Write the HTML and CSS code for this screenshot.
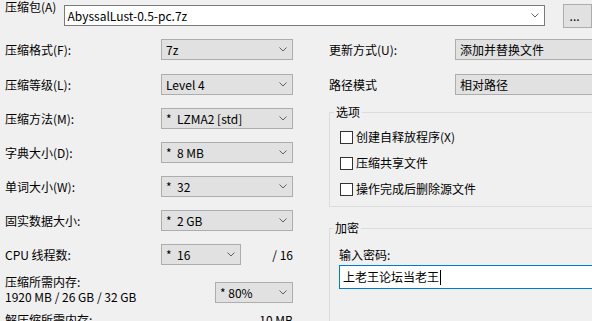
FILE: index.html
```html
<!DOCTYPE html>
<html lang="zh-CN">
<head>
<meta charset="UTF-8">
<title>添加到压缩包</title>
<link rel="stylesheet" href="styles.css">
</head>
<body>
<div class="dialog">
  <div class="archive">
    <span class="archive-label">压缩包(A)</span>
    <div class="combo edit archive-combo">
      <span>AbyssalLust-0.5-pc.7z</span>
      <svg class="chev" width="8" height="5" viewBox="0 0 8 5"><polyline points="0.5,0.5 4,4 7.5,0.5"/></svg>
    </div>
    <button class="browse">...</button>
  </div>

  <div class="columns">
    <div class="left">
      <div class="row">
        <span class="label">压缩格式(F):</span>
        <div class="combo"><span>7z</span><svg class="chev" width="8" height="5" viewBox="0 0 8 5"><polyline points="0.5,0.5 4,4 7.5,0.5"/></svg></div>
      </div>
      <div class="row">
        <span class="label">压缩等级(L):</span>
        <div class="combo"><span>Level 4</span><svg class="chev" width="8" height="5" viewBox="0 0 8 5"><polyline points="0.5,0.5 4,4 7.5,0.5"/></svg></div>
      </div>
      <div class="row">
        <span class="label">压缩方法(M):</span>
        <div class="combo"><span>* &nbsp;LZMA2 [std]</span><svg class="chev" width="8" height="5" viewBox="0 0 8 5"><polyline points="0.5,0.5 4,4 7.5,0.5"/></svg></div>
      </div>
      <div class="row">
        <span class="label">字典大小(D):</span>
        <div class="combo"><span>* &nbsp;8 MB</span><svg class="chev" width="8" height="5" viewBox="0 0 8 5"><polyline points="0.5,0.5 4,4 7.5,0.5"/></svg></div>
      </div>
      <div class="row">
        <span class="label">单词大小(W):</span>
        <div class="combo"><span>* &nbsp;32</span><svg class="chev" width="8" height="5" viewBox="0 0 8 5"><polyline points="0.5,0.5 4,4 7.5,0.5"/></svg></div>
      </div>
      <div class="row">
        <span class="label">固实数据大小:</span>
        <div class="combo"><span>* &nbsp;2 GB</span><svg class="chev" width="8" height="5" viewBox="0 0 8 5"><polyline points="0.5,0.5 4,4 7.5,0.5"/></svg></div>
      </div>
      <div class="row cpu">
        <span class="label">CPU 线程数:</span>
        <div class="combo small"><span>* &nbsp;16</span><svg class="chev" width="8" height="5" viewBox="0 0 8 5"><polyline points="0.5,0.5 4,4 7.5,0.5"/></svg></div>
        <span class="max">/ 16</span>
      </div>
      <div class="mem">
        <div class="mem-text">
          <div>压缩所需内存:</div>
          <div>1920 MB / 26 GB / 32 GB</div>
        </div>
        <div class="combo mem-combo"><span>* 80%</span><svg class="chev" width="8" height="5" viewBox="0 0 8 5"><polyline points="0.5,0.5 4,4 7.5,0.5"/></svg></div>
      </div>
      <div class="unpack">
        <span>解压缩所需内存:</span>
        <span>10 MB</span>
      </div>
    </div>

    <div class="right">
      <div class="row">
        <span class="label wide">更新方式(U):</span>
        <div class="combo plain"><span>添加并替换文件</span></div>
      </div>
      <div class="row last">
        <span class="label wide">路径模式</span>
        <div class="combo plain"><span>相对路径</span></div>
      </div>

      <fieldset class="group options">
        <legend>选项</legend>
        <label class="check"><span class="box"></span>创建自释放程序(X)</label>
        <label class="check"><span class="box"></span>压缩共享文件</label>
        <label class="check"><span class="box"></span>操作完成后删除源文件</label>
      </fieldset>

      <fieldset class="group encrypt">
        <legend>加密</legend>
        <div class="pw-label">输入密码:</div>
        <div class="pw-field"><span>上老王论坛当老王</span><span class="caret"></span></div>
      </fieldset>
    </div>
  </div>
</div>
</body>
</html>
```

FILE: styles.css
```css
html, body { margin: 0; overflow: hidden; }
body { background: #f0f0f0; color: #000; font-family: "Noto Sans CJK SC", sans-serif; font-size: 12px; line-height: 16px; }
.dialog { width: 592px; height: 321px; overflow: hidden; }

.archive { display: flex; align-items: flex-start; height: 39px; padding-left: 5px; }
.archive-label { width: 60px; margin-top: -1px; }
.archive-combo { width: 493px; height: 21px; margin-top: 5px; }
.browse { margin: 4px 0 0 18px; width: 30px; height: 24px; padding: 0 0 0 6px; background: #e1e1e1; border: 1px solid #adadad; font: inherit; text-align: left; }

.combo { box-sizing: border-box; display: flex; align-items: center; justify-content: space-between; height: 21px; padding: 0 5px 0 4px; background: #e1e1e1; border: 1px solid #adadad; white-space: nowrap; }
.combo.edit { background: #fff; border-color: #7a7a7a; padding-left: 3px; }
.chev { flex: none; }
.chev polyline { fill: none; stroke: #606060; stroke-width: 1; }

.columns { display: flex; }
.left { width: 288px; padding-left: 5px; flex: none; }
.right { margin-left: 36px; width: 300px; flex: none; }

.row { display: flex; align-items: center; height: 21px; margin-bottom: 13px; }
.row:first-child { margin-bottom: 14px; }
.row .combo { width: 132px; margin-left: auto; }
.row .combo.small { width: 80px; }
.row.cpu { margin-bottom: 9px; }
.row.last { margin-bottom: 0; }
.max { width: 52px; text-align: right; }

.label.wide { width: 126px; flex: none; }
.right .row .combo { margin-left: 0; width: 160px; }

.mem { display: flex; align-items: flex-end; line-height: 15px; }
.mem-text { flex: 1; }
.mem-combo { width: 78px; margin-bottom: 1px; }
.unpack { display: flex; justify-content: space-between; margin-top: 8px; line-height: 15px; }

.group { margin: 0; border: 1px solid #dcdcdc; width: 280px; box-sizing: border-box; }
.group legend { padding: 0 2px; margin-left: -6px; line-height: 16px; }
.options { margin-top: 9px; padding: 4px 0 4px 10px; }
.check { display: flex; align-items: center; height: 26px; }
.box { width: 11px; height: 11px; border: 1px solid #333; background: #fff; margin-right: 3px; }

.encrypt { margin-top: 13px; padding: 11px 0 40px 9px; }
.pw-label { margin-bottom: 2px; }
.pw-field { display: flex; align-items: center; box-sizing: border-box; height: 24px; padding-left: 3px; background: #fff; border: 1px solid #0078d7; }
.caret { width: 1px; height: 15px; background: #000; margin-left: 1px; }
```
